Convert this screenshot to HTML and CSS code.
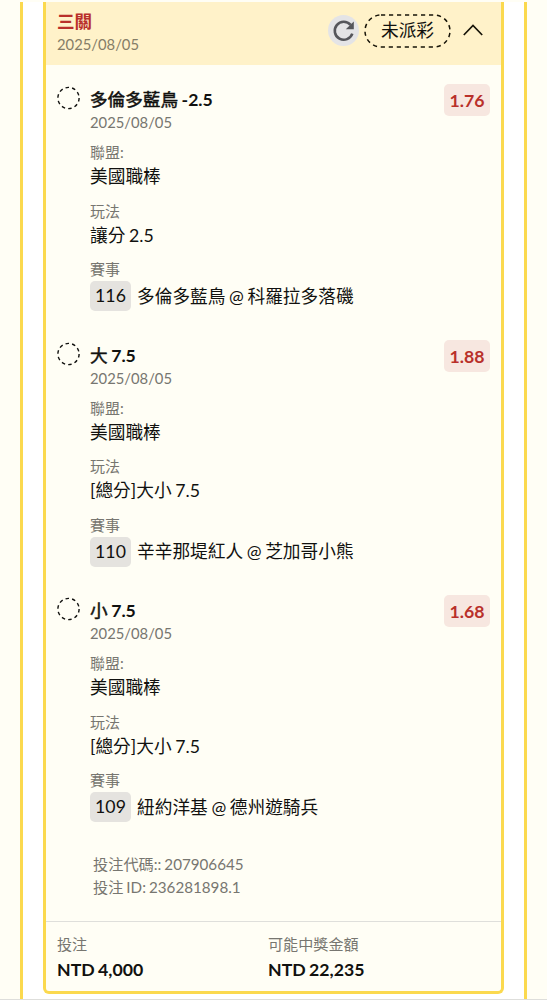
FILE: index.html
```html
<!DOCTYPE html>
<html lang="zh-Hant">
<head>
<meta charset="utf-8">
<title>三關</title>
<link rel="stylesheet" href="styles.css">
</head>
<body>
<div class="page">
  <main class="panel">
    <article class="ticket">
      <header class="head">
        <div class="head-text">
          <h1 class="kind">三關</h1>
          <div class="date">2025/08/05</div>
        </div>
        <span class="refresh"><svg width="24" height="24" viewBox="0 0 24 24"><path d="M20.3 14.6A9 9 0 1 1 18.6 5.9" fill="none" stroke="#55565b" stroke-width="2.6"/><path d="M21.8 2.4V10.3H13.8Z" fill="#55565b"/></svg></span>
        <span class="status"><svg class="outline" width="87" height="34"><rect x="1" y="1" width="85" height="32" rx="16" fill="none" stroke="#171408" stroke-width="1.5" stroke-dasharray="4.2 3.8"/></svg>未派彩</span>
        <svg class="chevron" width="20" height="12" viewBox="0 0 20 12"><path d="M.8 11 10 1.5 19.2 11" fill="none" stroke="#171408" stroke-width="1.7"/></svg>
      </header>
      <div class="legs">
        <section class="leg">
          <svg class="ring" width="24" height="24"><circle cx="12.5" cy="12" r="10.6"/></svg>
          <div class="leg-body">
            <h2 class="pick">多倫多藍鳥 <span class="line">-2.5</span></h2>
            <div class="date">2025/08/05</div>
            <dl class="facts">
              <div><dt>聯盟:</dt><dd>美國職棒</dd></div>
              <div><dt>玩法</dt><dd>讓分 2.5</dd></div>
              <div><dt>賽事</dt><dd class="match"><span class="number">116</span>多倫多藍鳥 @ 科羅拉多落磯</dd></div>
            </dl>
          </div>
          <span class="odds">1.76</span>
        </section>
        <section class="leg">
          <svg class="ring" width="24" height="24"><circle cx="12.5" cy="12" r="10.6"/></svg>
          <div class="leg-body">
            <h2 class="pick">大 <span class="line">7.5</span></h2>
            <div class="date">2025/08/05</div>
            <dl class="facts">
              <div><dt>聯盟:</dt><dd>美國職棒</dd></div>
              <div><dt>玩法</dt><dd>[總分]大小 7.5</dd></div>
              <div><dt>賽事</dt><dd class="match"><span class="number">110</span>辛辛那堤紅人 @ 芝加哥小熊</dd></div>
            </dl>
          </div>
          <span class="odds">1.88</span>
        </section>
        <section class="leg">
          <svg class="ring" width="24" height="24"><circle cx="12.5" cy="12" r="10.6"/></svg>
          <div class="leg-body">
            <h2 class="pick">小 <span class="line">7.5</span></h2>
            <div class="date">2025/08/05</div>
            <dl class="facts">
              <div><dt>聯盟:</dt><dd>美國職棒</dd></div>
              <div><dt>玩法</dt><dd>[總分]大小 7.5</dd></div>
              <div><dt>賽事</dt><dd class="match"><span class="number">109</span>紐約洋基 @ 德州遊騎兵</dd></div>
            </dl>
          </div>
          <span class="odds">1.68</span>
        </section>
      </div>
      <div class="codes">
        <div>投注代碼:: 207906645</div>
        <div>投注 ID: 236281898.1</div>
      </div>
      <footer class="totals">
        <div><div class="total-label">投注</div><div class="total">NTD 4,000</div></div>
        <div><div class="total-label">可能中獎金額</div><div class="total">NTD 22,235</div></div>
      </footer>
    </article>
  </main>
</div>
</body>
</html>
```
FILE: styles.css
```css
* { box-sizing: border-box; }
body {
  margin: 0;
  background: #fffef5;
  color: #11110f;
  font-family: Lato, "Noto Sans CJK TC", sans-serif;
  font-size: 17.7px;
  word-spacing: -.9px;
}
h1, h2, dl, dd { margin: 0; }
.page {
  height: 1000px;
  padding: 2px 20px 0;
  border-bottom: 1px solid #dededb;
  overflow: hidden;
}
.panel {
  height: 997px;
  padding: 0 20px;
  background: #fff;
  border: solid #fbd94e;
  border-width: 0 3px;
}
.ticket {
  height: 992px;
  display: flex;
  flex-direction: column;
  background: #fffef5;
  border: 3px solid #fbd94e;
  border-top: 0;
  border-radius: 0 0 6px 6px;
}
.head {
  height: 63px;
  flex: none;
  display: flex;
  padding: 8px 18px 0 11px;
  background: #fff2c9;
}
.head-text { flex: 1; }
.head .date { color: #857d67; }
.kind {
  font-size: 17.6px;
  line-height: 24px;
  font-weight: 700;
  color: #b9302a;
}
.date {
  font-size: 14.8px;
  line-height: 20px;
  color: #777670;
}
.refresh {
  width: 31px;
  height: 31px;
  margin-top: 5px;
  display: grid;
  place-items: center;
  border-radius: 50%;
  background: #e4e4e6;
}
.status {
  position: relative;
  width: 87px;
  height: 34px;
  margin: 4px 12px 0 5px;
  text-align: center;
  line-height: 34px;
}
.outline { position: absolute; left: 0; top: 0; }
.chevron { margin-top: 14px; }
.legs {
  display: flex;
  flex-direction: column;
  gap: 29.5px;
  padding: 22px 11px 0 10px;
}
.leg {
  height: 226px;
  display: flex;
  align-items: flex-start;
}
.ring {
  margin-top: -1px;
  fill: none;
  stroke: #11110f;
  stroke-width: 1.4;
  stroke-dasharray: 3.55 3.11;
}
.leg-body { flex: 1; margin-left: 10px; }
.pick {
  font-size: 17.6px;
  line-height: 25px;
  font-weight: 400;
  -webkit-text-stroke: .5px #11110f;
}
.line {
  font-weight: 700;
  -webkit-text-stroke: 0;
}
.leg .date { height: 30px; }
.facts {
  display: flex;
  flex-direction: column;
  gap: 9.5px;
}
dt {
  font-size: 15px;
  line-height: 20px;
  color: #777670;
}
dd { line-height: 29px; }
.match {
  height: 34px;
  display: flex;
  align-items: center;
  white-space: pre;
}
.number {
  width: 41px;
  height: 30px;
  margin-right: 6px;
  border-radius: 5px;
  background: #e5e3df;
  text-align: center;
  line-height: 30px;
}
.odds {
  width: 46px;
  height: 32px;
  margin-top: -3px;
  border-radius: 5px;
  background: #f7e7e0;
  color: #b9302a;
  font-weight: 700;
  text-align: center;
  line-height: 33px;
}
.codes {
  padding: 29px 0 0 47px;
  height: 97px;
  font-size: 15.2px;
  line-height: 23px;
  color: #777670;
}
.totals {
  flex: 1;
  display: grid;
  grid-template-columns: 211px 1fr;
  padding: 11px 11px 0;
  border-top: 1px solid #dfdfdb;
}
.total-label {
  font-size: 15.1px;
  line-height: 22px;
  color: #777670;
}
.total {
  font-weight: 700;
  line-height: 30px;
}
```
